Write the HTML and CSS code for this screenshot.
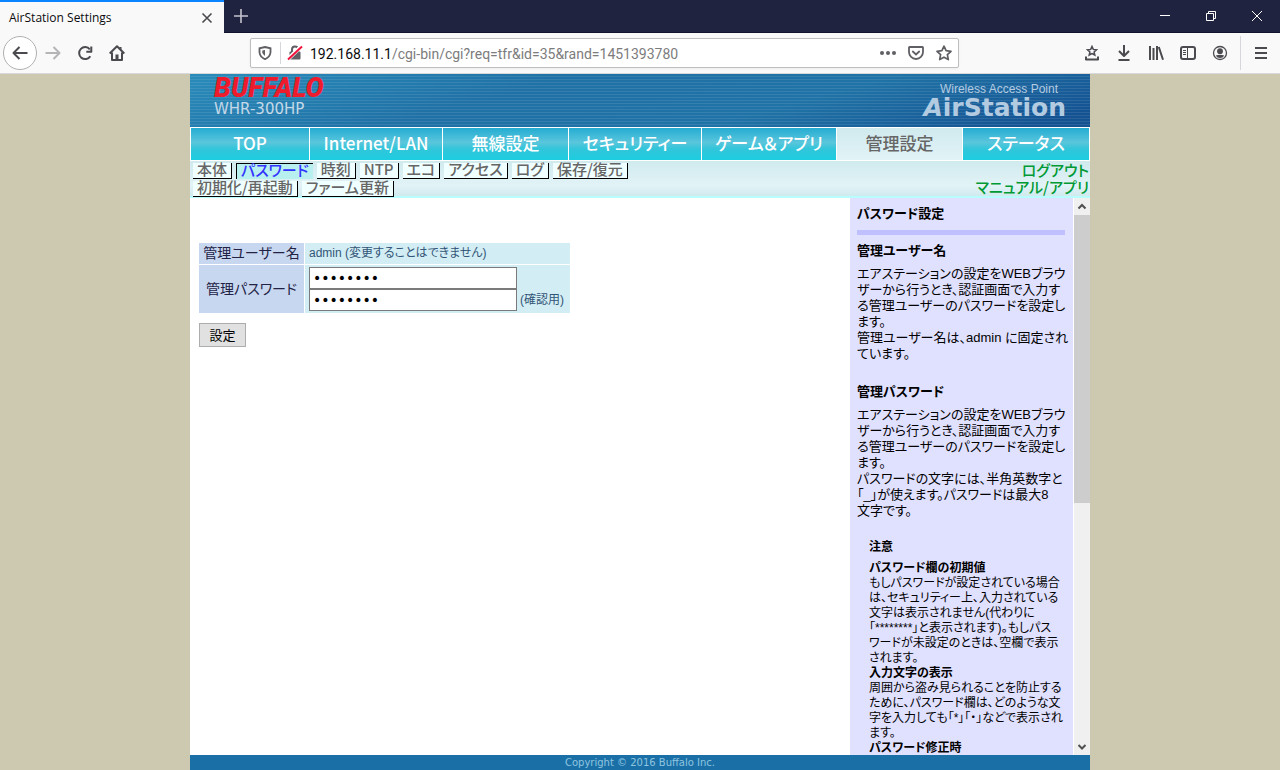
FILE: index.html
```html
<!DOCTYPE html>
<html lang="ja">
<head>
<meta charset="utf-8">
<title>AirStation Settings</title>
<link rel="stylesheet" href="styles.css">
</head>
<body>
<header class="browser">
  <div class="titlebar">
    <div class="browser-tab">
      <span>AirStation Settings</span>
      <button class="icon-btn tab-close" aria-label="Close tab"><svg width="12" height="12" viewBox="0 0 12 12"><path d="M1.5 1.5l9 9M10.500 1.500l-9 9" fill="none" stroke="#4a4a4f" stroke-width="1.600"/></svg></button>
    </div>
    <button class="icon-btn new-tab" aria-label="New tab"><svg width="14" height="14" viewBox="0 0 14 14"><path d="M7 0v14M0 7h14" fill="none" stroke="#c4c4cf" stroke-width="1.600"/></svg></button>
    <div class="window-buttons">
      <button class="icon-btn" aria-label="Minimize"><svg width="10" height="10" viewBox="0 0 10 10"><path d="M0 4.500h10" stroke="#fff" fill="none"/></svg></button>
      <button class="icon-btn" aria-label="Restore"><svg width="10" height="10" viewBox="0 0 10 10"><path d="M.5 2.500h7v7h-7zM2.500 2.500v-2h7v7h-2" stroke="#fff" fill="none"/></svg></button>
      <button class="icon-btn" aria-label="Close"><svg width="10" height="10" viewBox="0 0 10 10"><path d="M0 0l10 10M10 0L0 10" stroke="#fff" fill="none"/></svg></button>
    </div>
  </div>
  <div class="toolbar">
    <div class="nav-buttons">
      <button class="icon-btn back" aria-label="Back"><svg width="16" height="16" viewBox="0 0 16 16"><path d="M15.500 8H1.500M7.500 2L1.500 8l6 6" class="line"/></svg></button>
      <button class="icon-btn" aria-label="Forward"><svg width="16" height="16" viewBox="0 0 16 16"><path d="M.5 8h14M8.500 2l6 6-6 6" class="line faded"/></svg></button>
      <button class="icon-btn" aria-label="Reload"><svg width="16" height="16" viewBox="0 0 16 16"><path d="M13.300 11.200A6 6 0 1 1 12.800 4.300" class="line"/><path d="M9.300 6.800H14.300V1.500" class="line"/></svg></button>
      <button class="icon-btn" aria-label="Home"><svg width="16" height="16" viewBox="0 0 16 16"><path d="M.7 8.500L8 1.300l7.300 7.200M3 7.500V15h10V7.500" class="line"/><path d="M6.500 15V9.500h3V15zM10 2h2.500v3z" fill="#4a4a4f"/></svg></button>
    </div>
    <div class="url-bar">
      <svg width="14" height="14" viewBox="0 0 14 14"><path d="M7 1L12.500 2.300V6.500Q12 11 7 13.200Q2 11 1.500 6.500V2.300z" fill="none" stroke="#5f5f64" stroke-width="1.800"/><path d="M7 4v6Q4.500 8.500 4.300 6.300V4.600z" fill="#5f5f64"/></svg>
      <span class="url-divider"></span>
      <svg width="16" height="16" viewBox="0 0 16 16"><path d="M5 7V4.500a3 3 0 0 1 6 0V7" fill="none" stroke="#5f5f64" stroke-width="2"/><rect x="2.500" y="6.500" width="11" height="8" rx="1" fill="#5f5f64"/><path d="M1 14L14.500 1" stroke="#fff" stroke-width="4"/><path d="M1 14.500L15 1.500" stroke="#f0143c" stroke-width="2"/></svg>
      <span class="url-text"><b>192.168.11.1</b>/cgi-bin/cgi?req=tfr&amp;id=35&amp;rand=1451393780</span>
      <button class="icon-btn" aria-label="Page actions"><svg width="16" height="16" viewBox="0 0 16 16"><g fill="#5f5f64"><circle cx="2" cy="8" r="2"/><circle cx="8" cy="8" r="2"/><circle cx="14" cy="8" r="2"/></g></svg></button>
      <button class="icon-btn" aria-label="Pocket"><svg width="16" height="16" viewBox="0 0 16 16"><path d="M1.500 2h13q.5 0 .5.6V7a7 7 0 0 1-14 0V2.600Q1 2 1.500 2z" fill="none" stroke="#5f5f64" stroke-width="1.800"/><path d="M4.800 6.500L8 9.500l3.200-3" fill="none" stroke="#5f5f64" stroke-width="1.800" stroke-linecap="round"/></svg></button>
      <button class="icon-btn" aria-label="Bookmark"><svg width="16" height="16" viewBox="0 0 16 16"><path d="M8 1.200l2.100 4.500 4.900.6-3.600 3.400.9 4.900L8 12.200l-4.300 2.400.9-4.900L1 6.300l4.900-.6z" fill="none" stroke="#5f5f64" stroke-width="1.700" stroke-linejoin="round"/></svg></button>
    </div>
    <div class="tool-buttons">
      <button class="icon-btn" aria-label="Bookmarks"><svg width="16" height="16" viewBox="0 0 16 16"><path d="M8 1.500l1.300 2.900 3.200.4-2.400 2.100.7 3.100L8 8.500 5.200 10l.7-3.100-2.400-2.100 3.200-.4z" fill="none" stroke="#4a4a4f" stroke-width="1.500"/><path d="M2 11.500v3h12v-3" class="line"/></svg></button>
      <button class="icon-btn" aria-label="Downloads"><svg width="16" height="16" viewBox="0 0 16 16"><path d="M8 0v11M3 6l5 5 5-5M2.500 15h11" class="line"/></svg></button>
      <button class="icon-btn" aria-label="Library"><svg width="16" height="16" viewBox="0 0 16 16"><path d="M2 1v14M5.500 3v12M9 1v14M10.800 2L15 14.800" class="line"/></svg></button>
      <button class="icon-btn" aria-label="Sidebar"><svg width="16" height="16" viewBox="0 0 16 16"><rect x="1" y="2" width="14" height="12" rx="2" class="line"/><path d="M7.500 2v12" stroke="#4a4a4f"/><path d="M3 5.500h3M3 7.500h3M3 9.500h3" stroke="#4a4a4f"/></svg></button>
      <button class="icon-btn" aria-label="Account"><svg width="16" height="16" viewBox="0 0 16 16"><circle cx="8" cy="8" r="6.500" fill="none" stroke="#4a4a4f" stroke-width="1.300"/><circle cx="8" cy="6.200" r="2.900" fill="#4a4a4f"/><path d="M3.800 10.500Q8 8.800 12.200 10.500Q11 13 8 13T3.800 10.500z" fill="#4a4a4f"/></svg></button>
      <span class="menu-divider"></span>
      <button class="icon-btn" aria-label="Menu"><svg width="16" height="16" viewBox="0 0 16 16"><path d="M2 3h12M2 8h12M2 13h12" class="line"/></svg></button>
    </div>
  </div>
</header>

<div class="app">
  <header class="banner">
    <div class="brand">
      <span class="brand-name">BUFFALO</span>
      <span class="brand-model">WHR-300HP</span>
    </div>
    <div class="product">
      <span class="product-kind">Wireless Access Point</span>
      <span class="product-name"><i>A</i>irStation</span>
    </div>
  </header>
  <nav class="tabs">
    <a href="#">TOP</a>
    <a href="#">Internet/LAN</a>
    <a href="#">無線設定</a>
    <a href="#">セキュリティー</a>
    <a href="#">ゲーム＆アプリ</a>
    <a href="#" class="current">管理設定</a>
    <a href="#">ステータス</a>
  </nav>
  <div class="subnav">
    <nav class="subtabs">
      <div class="subtab-row">
        <a href="#">本体</a>
        <a href="#" class="current">パスワード</a>
        <a href="#">時刻</a>
        <a href="#">NTP</a>
        <a href="#">エコ</a>
        <a href="#">アクセス</a>
        <a href="#">ログ</a>
        <a href="#">保存/復元</a>
      </div>
      <div class="subtab-row">
        <a href="#">初期化/再起動</a>
        <a href="#">ファーム更新</a>
      </div>
    </nav>
    <nav class="links">
      <a href="#">ログアウト</a>
      <a href="#">マニュアル/アプリ</a>
    </nav>
  </div>
  <div class="content">
    <main class="main">
      <form>
        <table class="settings">
          <tr>
            <th scope="row">管理ユーザー名</th>
            <td>admin (変更することはできません)</td>
          </tr>
          <tr>
            <th scope="row"><label for="password">管理パスワード</label></th>
            <td class="fields">
              <input id="password" type="password" value="********">
              <div class="confirm">
                <input id="confirm" type="password" value="********">
                <label for="confirm">(確認用)</label>
              </div>
            </td>
          </tr>
        </table>
        <button type="button" class="submit">設定</button>
      </form>
    </main>
    <aside class="help">
      <div class="help-text">
        <h1>パスワード設定</h1>
        <hr>
        <h2>管理ユーザー名</h2>
        <p>エアステーションの設定をWEBブラウ<br>ザーから行うとき、認証画面で入力す<br>る管理ユーザーのパスワードを設定し<br>ます。<br>管理ユーザー名は、admin に固定され<br>ています。</p>
        <h2>管理パスワード</h2>
        <p>エアステーションの設定をWEBブラウ<br>ザーから行うとき、認証画面で入力す<br>る管理ユーザーのパスワードを設定し<br>ます。<br>パスワードの文字には、半角英数字と<br>「_」が使えます。パスワードは最大8<br>文字です。</p>
        <div class="notes">
          <h3>注意</h3>
          <h4>パスワード欄の初期値</h4>
          <p>もしパスワードが設定されている場合<br>は、セキュリティー上、入力されている<br>文字は表示されません(代わりに<br>「********」と表示されます)。もしパス<br>ワードが未設定のときは、空欄で表示<br>されます。</p>
          <h4>入力文字の表示</h4>
          <p>周囲から盗み見られることを防止する<br>ために、パスワード欄は、どのような文<br>字を入力しても「*」「・」などで表示され<br>ます。</p>
          <h4>パスワード修正時</h4>
        </div>
      </div>
      <div class="scrollbar">
        <svg width="16" height="17" viewBox="0 0 16 17"><path d="M4.500 10.500L8 7l3.500 3.500" fill="none" stroke="#505050" stroke-width="2"/></svg>
        <div class="scroll-track"><div class="scroll-thumb"></div></div>
        <svg width="16" height="17" viewBox="0 0 16 17"><path d="M4.500 7L8 10.500 11.500 7" fill="none" stroke="#505050" stroke-width="2"/></svg>
      </div>
    </aside>
  </div>
  <footer class="footer">Copyright © 2016 Buffalo Inc.</footer>
</div>
</body>
</html>
```
FILE: styles.css
```css
* {
  box-sizing: border-box;
}

body {
  margin: 0;
  height: 100vh;
  display: flex;
  flex-direction: column;
  overflow: hidden;
  background: #cdc8b0;
  font-family: "Noto Sans CJK JP", sans-serif;
  font-feature-settings: "palt";
}

a {
  text-decoration: none;
}

.icon-btn {
  display: flex;
  align-items: center;
  justify-content: center;
  padding: 0;
  border: 0;
  background: none;
}

.line {
  fill: none;
  stroke: #4a4a4f;
  stroke-width: 2;
  stroke-linejoin: round;
}

.faded {
  stroke: #b5b5b7;
}

/* Browser window */

.browser {
  flex: none;
  font-family: "Open Sans", sans-serif;
}

.titlebar {
  display: flex;
  align-items: center;
  height: 33px;
  background: #202340;
  border-bottom: 1px solid #12142b;
}

.browser-tab {
  display: flex;
  align-items: center;
  justify-content: space-between;
  width: 224px;
  height: 33px;
  padding: 1px 11px 0 9px;
  border-top: 2px solid #0a84ff;
  background: #f9f9fa;
  color: #0c0c0d;
  font-size: 12px;
}

.new-tab {
  margin-left: 10px;
}

.window-buttons {
  display: flex;
  margin-left: auto;
}

.window-buttons .icon-btn {
  width: 46px;
  height: 32px;
}

.toolbar {
  display: flex;
  align-items: center;
  height: 41px;
  background: #f9f9fa;
  border-bottom: 1px solid #d8d8da;
}

.nav-buttons {
  display: flex;
  align-items: center;
  width: 250px;
  padding-left: 3px;
  gap: 16px;
}

.nav-buttons .back {
  width: 34px;
  height: 34px;
  margin-right: -8px;
  border: 1px solid #b0b0b2;
  border-radius: 50%;
  background: #fff;
}

.url-bar {
  display: flex;
  align-items: center;
  gap: 12px;
  width: 709px;
  height: 30px;
  padding: 0 6px 0 7px;
  border: 1px solid #bebebf;
  border-radius: 2px;
  background: #fff;
  box-shadow: 0 1px 3px #0000000d;
}

.url-divider {
  width: 1px;
  height: 22px;
  margin: 0 -6px 0 -4px;
  background: #d7d7db;
}

.url-text {
  flex: 1;
  margin-left: -5px;
  padding-top: 1px;
  color: #7c7c7d;
  font-family: Roboto, sans-serif;
  font-size: 14px;
}

.url-text b {
  color: #0c0c0d;
  font-weight: 400;
}

.tool-buttons {
  display: flex;
  align-items: center;
  gap: 16px;
  margin-left: auto;
  padding-right: 11px;
}

.menu-divider {
  width: 1px;
  height: 34px;
  margin: 0 -4px;
  background: #d7d7db;
}

/* Router settings page */

.app {
  flex: 1;
  min-height: 0;
  width: 100%;
  max-width: 900px;
  margin: 0 auto;
  display: flex;
  flex-direction: column;
  background: #fff;
}

.banner {
  display: flex;
  justify-content: space-between;
  height: 53px;
  padding: 0 24px;
  background:
    repeating-linear-gradient(#ffffff00 0 2px, #ffffff18 2px 3px),
    linear-gradient(165deg, #2a8cba 0%, #2071a6 35%, #2073a6 65%, #145292 95%);
}

.brand,
.product {
  display: flex;
  flex-direction: column;
}

.brand-name {
  color: #ee1b2d;
  font: italic 900 27px/29px Roboto, "Liberation Sans", sans-serif;
}

.brand-model {
  color: #c4d8e8;
  font: 15px/12px "DejaVu Sans", sans-serif;
}

.product {
  align-items: flex-end;
  padding-top: 8px;
}

.product-kind {
  margin-right: 8px;
  color: #b3cbe1;
  font: 12px/14px "Liberation Sans", sans-serif;
}

.product-name {
  color: #b3cbe1;
  font: bold 25px/24px "DejaVu Sans", sans-serif;
}

.tabs {
  display: grid;
  grid-template-columns: 118fr 132fr 125fr 132fr 134fr 125fr 126fr;
  gap: 1px;
  padding: 1px;
}

.tabs a {
  height: 32px;
  background: linear-gradient(#25acd2, #5ac6dc 45%, #32c5da 65%, #1dcde0);
  color: #fff;
  font-size: 17px;
  font-weight: 500;
  line-height: 30px;
  text-align: center;
}

.tabs a.current {
  background: linear-gradient(#d0eaee, #e2f3f7);
  color: #666;
}

.subnav {
  display: flex;
  justify-content: space-between;
  height: 37px;
  padding: 2px 1px 0 3px;
  border-bottom: 2px solid #b8fdff;
  background: linear-gradient(#d0eaee, #e2f3f7 70%, #d0eaee);
  font-size: 15px;
  font-weight: 500;
  line-height: 14px;
}

.subtabs {
  display: flex;
  flex-direction: column;
  gap: 2px;
}

.subtab-row {
  display: flex;
  gap: 4px;
}

.subtab-row a {
  height: 16px;
  padding: 0 4px;
  border-right: 1px solid #000;
  border-bottom: 1px solid #000;
  background: #f0ffff;
  color: #666;
  line-height: 12px;
}

.subtab-row a.current {
  border: solid #000;
  border-width: 1px 0 0 1px;
  background: #b8f0f0;
  color: #33f;
}

.links {
  display: flex;
  flex-direction: column;
  align-items: flex-end;
  gap: 3px;
}

.links a {
  color: #093;
}

.content {
  flex: 1;
  min-height: 0;
  display: flex;
}

.main {
  flex: 1;
  padding: 44px 8px;
}

.settings {
  border-spacing: 1px;
  color: #335;
  font-size: 12px;
  line-height: 17px;
}

.settings th {
  width: 105px;
  padding: 1px 4px 3px;
  background: #c8d7f0;
  color: #224;
  font-size: 14px;
  font-weight: 400;
}

.settings td {
  width: 265px;
  padding: 2px 4px;
  background: #d2edf4;
  color: #357;
  font-family: "Liberation Sans", "Noto Sans CJK JP", sans-serif;
}

.settings input {
  display: block;
  width: 208px;
  height: 22px;
  padding: 1px 3px;
  border: 1px solid #7a7a7a;
  background: #fff;
  color: #000;
  font: 14px "DejaVu Sans", sans-serif;
}

.confirm {
  display: flex;
  align-items: center;
  gap: 3px;
}

.submit {
  width: 47px;
  height: 24px;
  margin: 9px 1px;
  padding: 0;
  border: 1px solid #adadad;
  background: #e1e1e1;
  color: #000;
  font: 13px/20px "Noto Sans CJK JP", sans-serif;
}

.help {
  display: flex;
  width: 240px;
  overflow: hidden;
  color: #000;
}

.help-text {
  flex: 1;
  padding: 8px 8px 0 7px;
  overflow: hidden;
  background: #e0e0ff;
  font-family: "Liberation Sans", "Noto Sans CJK JP", sans-serif;
  font-size: 13px;
  line-height: 16px;
  white-space: nowrap;
}

.help-text h1,
.help-text h2,
.help-text h3,
.help-text h4,
.help-text p {
  margin: 0;
}

.help-text h1,
.help-text h2 {
  font-size: 13px;
  line-height: 16px;
}

.help-text hr {
  height: 5px;
  margin: 8px 0;
  border: 0;
  background: #c0c0ff;
}

.help-text h2 {
  margin-bottom: 7px;
}

.help-text p + h2 {
  margin-top: 22px;
}

.notes {
  padding: 21px 12px 0;
  font-size: 12px;
  line-height: 15px;
}

.notes h3,
.notes h4 {
  font-size: 12px;
}

.help-text .notes h3 {
  margin-bottom: 6px;
}

.scrollbar {
  display: flex;
  flex-direction: column;
  width: 17px;
  border-left: 1px solid #fff;
  background: #f0f0f0;
}

.scroll-track {
  flex: 1;
}

.scroll-thumb {
  height: 55%;
  background: #cdcdcd;
}

.footer {
  height: 15px;
  background: #1a70a6;
  color: #8fc4e0;
  font: 10px/15px "DejaVu Sans", sans-serif;
  text-align: center;
}
```
